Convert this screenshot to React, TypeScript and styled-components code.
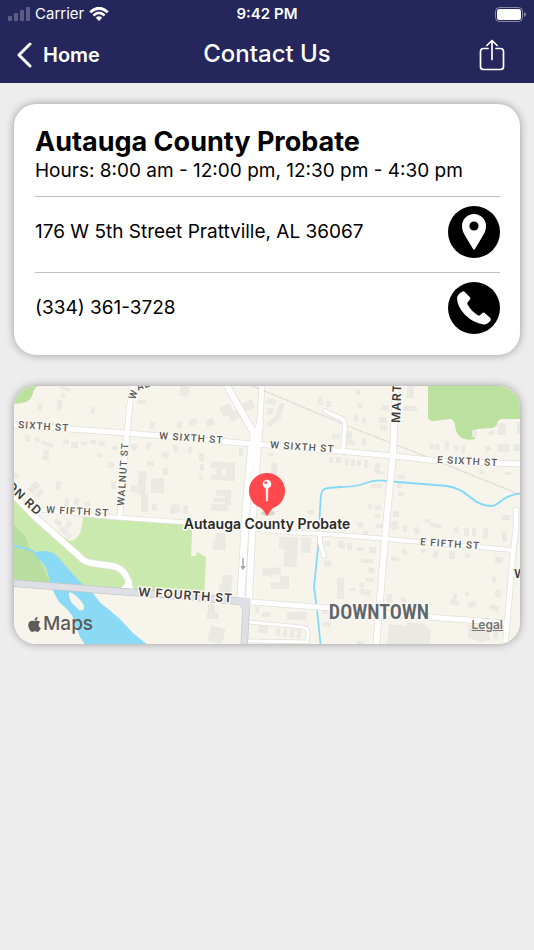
import React from "react";
import styled, { createGlobalStyle } from "styled-components";
import { FaApple } from "react-icons/fa";

const GlobalStyle = createGlobalStyle`
  *, *::before, *::after { box-sizing: border-box; }
  body {
    margin: 0;
    background: #ededed;
    color: #000;
    font-family: Inter, "Liberation Sans", sans-serif;
  }
`;

const Screen = styled.div`
  min-height: 100vh;
  background: #ededed;
`;

const Header = styled.header`
  background: #24265c;
  color: #fff;
`;

const StatusBar = styled.div`
  display: grid;
  grid-template-columns: 1fr auto 1fr;
  align-items: center;
  height: 28px;
  padding: 0 8px;
  font-size: 15px;
  line-height: 18px;
`;

const StatusGroup = styled.div<{ $end?: boolean }>`
  display: flex;
  align-items: center;
  gap: 5px;
  justify-content: ${(p) => (p.$end ? "flex-end" : "flex-start")};
`;

const Clock = styled.time`
  font-weight: 600;
`;

const NavBar = styled.nav`
  display: grid;
  grid-template-columns: 1fr auto 1fr;
  align-items: center;
  height: 55px;
  padding: 0 16px 2px;
`;

const NavButton = styled.button<{ $end?: boolean }>`
  display: flex;
  align-items: center;
  gap: 10px;
  justify-self: ${(p) => (p.$end ? "end" : "start")};
  padding: ${(p) => (p.$end ? "0 12px" : "0")};
  border: 0;
  background: none;
  color: inherit;
  font: inherit;
  font-size: 20px;
  font-weight: 600;
  cursor: pointer;
`;

const NavTitle = styled.h1`
  margin: 0;
  padding-bottom: 2px;
  font-size: 24px;
  line-height: 28px;
  font-weight: 500;
`;

const Content = styled.main`
  display: flex;
  flex-direction: column;
  gap: 31px;
  padding: 21px 14px 24px;
`;

const Card = styled.section`
  padding: 21px 20px 7px 21px;
  border-radius: 22px;
  background: #fff;
  box-shadow: 0 0 9px rgba(0, 0, 0, 0.36);
`;

const OfficeName = styled.h2`
  margin: 0;
  font-size: 27px;
  line-height: 34px;
  font-weight: 700;
`;

const Hours = styled.p`
  margin: 0 0 13px;
  font-size: 19px;
  line-height: 24px;
`;

const ContactRow = styled.div`
  display: flex;
  align-items: center;
  justify-content: space-between;
  gap: 16px;
  padding: 9px 0 14px;
  border-top: 1px solid #bdbdbd;
  font-size: 19px;
  line-height: 24px;
`;

const Address = styled.address`
  font-style: normal;
`;

const RoundLink = styled.a`
  display: flex;
  flex: none;
  width: 52px;
  height: 52px;
  border-radius: 50%;
  background: #000;
  color: #fff;
`;

const MapCard = styled.section`
  position: relative;
  overflow: hidden;
  border-radius: 22px;
  background: #f7f4eb;
`;

const MapShadow = styled.div`
  border-radius: 22px;
  box-shadow: 0 0 9px rgba(0, 0, 0, 0.36);
`;

const MapDrawing = styled.svg`
  display: block;
  width: 100%;
  aspect-ratio: 506 / 258;
`;

const MapBrand = styled.div`
  position: absolute;
  left: 12px;
  bottom: 8px;
  display: flex;
  align-items: center;
  color: #5c5c59;
  font-size: 19px;
  line-height: 24px;
  font-weight: 500;
`;

const LegalLink = styled.a`
  position: absolute;
  right: 17px;
  bottom: 12px;
  color: #777673;
  font-size: 12px;
  line-height: 14px;
  font-weight: 600;
`;

const StreetLabel = styled.text<{ $major?: boolean }>`
  font-family: ${(p) => (p.$major ? "Inter, sans-serif" : "Roboto, sans-serif")};
  font-size: ${(p) => (p.$major ? "12px" : "10px")};
  font-weight: ${(p) => (p.$major ? 600 : 500)};
  letter-spacing: 1px;
  fill: ${(p) => (p.$major ? "#3c3c3c" : "#595959")};
  stroke: #faf8f2;
  stroke-width: 3px;
  stroke-linejoin: round;
  paint-order: stroke;
`;

const DistrictLabel = styled.text`
  font-family: "Liberation Sans Narrow", "Roboto Condensed", Roboto, sans-serif;
  font-size: 20px;
  font-weight: 600;
  fill: #5f6669;
  stroke: #faf8f2;
  stroke-width: 3px;
  paint-order: stroke;
`;

const PlaceLabel = styled.text`
  font-family: Inter, sans-serif;
  font-size: 14px;
  font-weight: 600;
  fill: #2b2b2b;
  stroke: #fbfaf6;
  stroke-width: 3px;
  stroke-linejoin: round;
  paint-order: stroke;
`;

const SignalIcon = () => (
  <svg width="22" height="14" viewBox="0 0 22 14" fill="#fff" opacity="0.25" aria-hidden="true">
    <rect x="0" y="9" width="4" height="5" rx="1" />
    <rect x="6" y="6" width="4" height="8" rx="1" />
    <rect x="12" y="3" width="4" height="11" rx="1" />
    <rect x="18" y="0" width="4" height="14" rx="1" />
  </svg>
);

const WifiIcon = () => (
  <svg width="20" height="14" viewBox="0 0 20 14" fill="none" stroke="#fff" aria-hidden="true">
    <path d="M1.2 5.2Q10-2.8 18.8 5.2" strokeWidth="2.8" />
    <path d="M4.4 8.5Q10 3.4 15.6 8.5" strokeWidth="2.6" />
    <path d="M10 14 6.8 10.7Q10 8 13.2 10.7Z" fill="#fff" stroke="none" />
  </svg>
);

const BatteryIcon = () => (
  <svg width="31" height="15" viewBox="0 0 31 15" aria-hidden="true">
    <rect x="0.5" y="0.5" width="27" height="14" rx="4" fill="none" stroke="#fff" opacity="0.45" />
    <rect x="2" y="2" width="24" height="11" rx="2.5" fill="#fff" />
    <path d="M29 5v5q2-.8 2-2.5T29 5Z" fill="#fff" opacity="0.45" />
  </svg>
);

const BackIcon = () => (
  <svg width="17" height="26" viewBox="0 0 17 26" fill="none" stroke="#fff" strokeWidth="3" strokeLinecap="round" strokeLinejoin="round" aria-hidden="true">
    <path d="M14 2 3 13l11 11" />
  </svg>
);

const ShareIcon = () => (
  <svg width="28" height="32" viewBox="0 0 28 32" fill="none" stroke="#fff" strokeWidth="1.7" strokeLinecap="round" strokeLinejoin="round" aria-hidden="true">
    <path d="M10 9.5H5.5Q2.5 9.5 2.5 12.5V27.5Q2.5 30.5 5.5 30.5H22.5Q25.5 30.5 25.5 27.5V12.5Q25.5 9.5 22.5 9.5H18M14 20.5V1.5M8.8 6.5 14 1.5l5.2 5" />
  </svg>
);

const PlaceIcon = () => (
  <svg width="52" height="52" viewBox="0 0 52 52" aria-hidden="true">
    <path d="M26 8A12 12 0 0 0 14 20C14 24.5 15.8 27.5 18 31.2L25.1 43Q26 44.5 26.9 43L34 31.2C36.2 27.5 38 24.5 38 20A12 12 0 0 0 26 8Z" fill="#fff" />
    <circle cx="26" cy="20" r="4.6" fill="#000" />
  </svg>
);

const PhoneIcon = () => (
  <svg width="52" height="52" viewBox="0 0 52 52" aria-hidden="true">
    <path d="M14.5 9.5Q15.5 8.8 16.6 9.7L22 15.2Q22.9 16.3 22 17.4L19.7 20.3Q18.9 21.3 19.6 22.6Q23.3 29.5 29.9 33.2Q31.2 33.9 32.2 33L34.4 30.9Q35.5 29.9 36.7 30.9L42.3 36Q43.4 37.1 42.5 38.5Q39.5 42.8 35.5 42.5Q25.5 41 17.2 33Q9.5 25 9 16.5Q9 12.6 14.5 9.5Z" fill="#fff" />
  </svg>
);

type Building = [x: number, y: number, w: number, h: number, turn?: number];

const buildings: Building[] = [
  [37, 404, 5, 7, 5], [57, 400, 5, 10, 5], [61, 393, 4, 5, -15], [59, 387, 12, 3, 25], [91, 407, 4, 7, 10],
  [137, 400, 9, 4, 5], [150, 422, 5, 7, 5], [25, 435, 5, 7], [35, 437, 5, 5, -20], [41, 442, 12, 4, 18],
  [63, 440, 6, 4, 15], [71, 442, 7, 6], [81, 442, 6, 3, -10], [90, 440, 6, 4], [99, 441, 6, 5, 10],
  [97, 453, 5, 4, 15], [43, 450, 6, 10, 6], [13, 473, 6, 5, 35], [28, 484, 12, 7, -50], [35, 491, 9, 5, -50],
  [56, 481, 5, 9, 5], [65, 498, 4, 8], [74, 498, 5, 7, 10], [84, 502, 6, 5, -30], [108, 462, 6, 6, 20],
  [111, 482, 5, 7], [131, 444, 6, 6, 35], [112, 446, 6, 4], [146, 443, 5, 6, 20], [162, 452, 7, 6, 30],
  [147, 461, 7, 5], [138, 471, 8, 23, 3], [151, 478, 13, 15], [163, 468, 5, 7], [131, 485, 6, 7],
  [141, 494, 7, 18], [152, 504, 5, 7], [170, 506, 5, 8], [173, 445, 5, 7, -10], [188, 447, 4, 6, 10],
  [180, 386, 9, 10, 12], [177, 421, 5, 7, 5], [189, 419, 8, 6, -20], [206, 419, 8, 7, -20], [221, 405, 11, 10, -28],
  [229, 412, 10, 8, -28], [243, 401, 11, 9, -25], [267, 399, 9, 5, 12], [267, 408, 6, 6], [278, 403, 5, 13, 20],
  [266, 418, 16, 5, -38], [318, 397, 5, 8, -12], [326, 401, 5, 6], [239, 448, 4, 8], [268, 453, 5, 3],
  [271, 463, 6, 14, 4], [199, 453, 5, 8], [200, 464, 4, 7], [199, 475, 4, 5, -20], [211, 462, 24, 7, 3],
  [216, 469, 6, 9], [226, 468, 9, 13], [211, 475, 18, 5, 3], [216, 490, 15, 6, 3], [225, 490, 6, 16],
  [213, 498, 14, 4, 3], [211, 504, 17, 7, 3], [172, 504, 8, 9, -10], [183, 505, 5, 9], [307, 510, 7, 4],
  [356, 389, 4, 6], [357, 403, 5, 5], [354, 415, 4, 6, 15], [362, 418, 4, 5, 20], [381, 405, 8, 6, 10],
  [379, 417, 8, 6], [380, 425, 7, 5], [407, 386, 7, 8, 4], [404, 406, 13, 5, 4], [407, 393, 7, 5],
  [347, 431, 5, 8], [332, 434, 8, 5], [346, 440, 9, 5, 10], [362, 438, 4, 7], [329, 457, 4, 6],
  [336, 457, 5, 6], [345, 458, 4, 8], [351, 459, 4, 7], [357, 460, 4, 6], [364, 460, 4, 8], [375, 463, 5, 10, 12],
  [376, 471, 9, 3, 5], [371, 484, 11, 4, -6], [398, 475, 7, 4, 5], [397, 483, 5, 5], [398, 492, 6, 4],
  [368, 504, 4, 5, 10], [375, 505, 6, 5, -10], [394, 511, 5, 4], [430, 444, 4, 5], [435, 444, 5, 6],
  [445, 441, 4, 9], [454, 445, 4, 6], [461, 445, 4, 8], [485, 446, 6, 5, -30], [497, 444, 12, 8],
  [513, 444, 8, 7], [498, 423, 8, 12], [517, 422, 5, 12], [472, 430, 5, 7], [488, 431, 6, 4, -20],
  [479, 470, 5, 4], [505, 472, 6, 3], [54, 520, 8, 5, 45], [66, 521, 5, 8, 35], [59, 528, 9, 5, 40],
  [66, 533, 6, 5, -30], [141, 506, 6, 6], [215, 533, 10, 17, 4], [213, 541, 13, 9, 4], [222, 575, 10, 14, 5],
  [219, 585, 12, 8, 5], [279, 537, 19, 12, 2], [284, 544, 13, 23, 3], [262, 568, 19, 7, -4], [271, 582, 11, 7],
  [280, 576, 9, 13], [301, 538, 10, 15, 3], [324, 541, 6, 5], [324, 560, 7, 7, -15], [338, 541, 5, 7],
  [337, 578, 7, 21], [269, 569, 3, 8], [208, 604, 7, 13], [207, 613, 12, 6], [209, 627, 15, 16, 12],
  [255, 607, 4, 6], [262, 612, 9, 5], [287, 612, 20, 8, 2], [258, 625, 10, 8, 10], [276, 628, 4, 8, 10],
  [283, 629, 4, 8, 10], [290, 629, 4, 9, 10], [297, 629, 4, 9, 10], [322, 609, 8, 5], [323, 622, 8, 5],
  [375, 514, 5, 4], [358, 522, 5, 6, -15], [376, 524, 8, 4, 8], [363, 531, 5, 4], [393, 512, 6, 5],
  [391, 521, 7, 9, -10], [403, 525, 4, 7], [414, 527, 5, 7, -20], [425, 519, 5, 4, 20], [430, 523, 12, 5, 15],
  [454, 527, 5, 6], [464, 528, 5, 8], [472, 528, 4, 8], [483, 528, 5, 11, 5], [502, 515, 8, 5],
  [502, 532, 5, 10, -8], [341, 543, 4, 6], [347, 543, 5, 7], [357, 547, 7, 4], [369, 547, 7, 6],
  [361, 559, 12, 4, 5], [368, 568, 6, 5, 10], [366, 578, 8, 4, 8], [359, 583, 5, 4], [350, 588, 6, 3],
  [360, 589, 11, 6, 15], [391, 557, 8, 4, 10], [402, 549, 5, 6, -20], [421, 549, 5, 4], [433, 551, 5, 7, 15],
  [449, 551, 6, 8], [465, 553, 5, 5, 10], [495, 557, 8, 6, 8], [492, 576, 4, 7, -8], [495, 590, 6, 7, 15],
  [490, 605, 9, 6, 20], [450, 600, 9, 5, 10], [453, 594, 4, 7, 15], [465, 592, 4, 4], [468, 602, 8, 5, -15],
  [387, 594, 5, 10], [401, 597, 5, 6, -20], [357, 641, 7, 4], [373, 642, 4, 3], [493, 630, 5, 9],
];

const fourthStreet = "M10 583 180 596 248 602";
const whiteRoads: { d: string; w: number }[] = [
  { d: "M13 425 127 433 253 444 350 452 393 456 440 461 521 464", w: 5 },
  { d: "M134 382 130 402 126 446 120 515", w: 5 },
  { d: "M35 509 110 517 180 522 287 532 340 535 387 539 420 542 512 550", w: 4 },
  { d: "M225 382 253 432 254 446", w: 6 },
  { d: "M262 382 260 422Q259 428 254 433", w: 5 },
  { d: "M260 422 258 445 253 515 249 600", w: 6 },
  { d: "M252 444 246 510 241 598", w: 7 },
  { d: "M396 382 393 455 387 515 376 648", w: 6 },
  { d: "M516 510V530L513 553 505 648", w: 5 },
  { d: "M325 411 342 419Q345 421 345 426L343 450", w: 4 },
  { d: "M250 602 330 608 428 617 506 623", w: 5 },
  { d: "M320 533V543L324 556", w: 4 },
  { d: "M249 622 302 627Q309 628 308 634L307 642 249 641", w: 3 },
  { d: "M8 489 35 517 80 557Q84 562 91 563L112 566Q120 567 125 574L129 582 129 587", w: 6 },
];

const CountyMap = () => (
  <MapDrawing viewBox="14 386 506 258" preserveAspectRatio="xMidYMid slice" role="img" aria-label="Map of downtown Prattville">
    <defs>
      <path id="walnut-bend" d="M135 400 138 391Q141 389 180 377" />
    </defs>
    <rect x="0" y="370" width="534" height="300" fill="#f7f4eb" />
    <g fill="#bbe19f">
      <path d="M10 382H44Q33 388 33 393 31 402 22 403L10 405Z" />
      <path d="M428 382V417Q429 421 433 421L450 419Q454 419 455 425 456 435 462 438 468 441 475 439L476 429 493 428 497 425Q497 420 502 419H524V382Z" />
    </g>
    <path d="M10 494 36 518 70 541Q82 540 83 516L192 524V533L191 556 196 556 197 552 206 557 204 599 10 584Z" fill="#c9e9ad" />
    <path d="M10 523Q25 532 28 543L30 549 38 556 50 583 10 582Z" fill="#b9dfa0" />
    <g fill="#ebe9e4">
      {buildings.map(([x, y, w, h, turn = 0], i) => (
        <rect key={i} x={x} y={y} width={w} height={h} transform={`rotate(${turn} ${x + w / 2} ${y + h / 2})`} />
      ))}
      <path d="M389 624 406 626 408 622 424 624 431 630 430 644H387Z" />
      <path d="M468 625 490 629V640L480 642 468 637Z" />
    </g>
    <g fill="none" stroke="#dcdad5">
      <path d="M250 385 303 407 350 427 425 456 521 495" strokeWidth="1" />
      <path d="M250 385 303 407 350 427 425 456 521 495" strokeWidth="2" strokeDasharray="1 7" />
    </g>
    <path d="M35 553Q42 549 53 553 58 556 63 563L82 584 93 593Q99 603 107 608L120 619 133 633 149 646H86L80 637 75 623Q73 613 60 603 54 595 50 582L47 570Q45 564 37 558Z" fill="#8adaf6" />
    <path d="M10 546Q24 546 36 553" fill="none" stroke="#8adaf6" strokeWidth="2" />
    <path d="M70 592Q80 597 84 606 84 612 79 610L71 602Q67 593 70 592Z" fill="#f7f4eb" />
    <path d="M321 648 317 610 314 587 318 548 320 510 321 495Q322 488 329 488L340 487Q356 487 366 483T385 481L423 484 447 486Q460 488 470 497T492 506C500 505 502 495 523 493" fill="none" stroke="#84d9f8" strokeWidth="1.8" />
    <g fill="none" strokeLinejoin="round">
      {whiteRoads.map((road, i) => (
        <path key={i} d={road.d} stroke="#e1dfda" strokeWidth={road.w + 1.5} strokeLinecap="round" />
      ))}
      {whiteRoads.map((road, i) => (
        <path key={i} d={road.d} stroke="#fff" strokeWidth={road.w} strokeLinecap="round" />
      ))}
      <path d="M120 589 128 580 134 589Z" fill="#fff" />
      <path d={fourthStreet} stroke="#c6c7cb" strokeWidth="7.5" />
      <path d="M246 599V612L244 648" stroke="#c6c7cb" strokeWidth="7.5" />
      <path d={fourthStreet} stroke="#dfe0e5" strokeWidth="6" />
      <path d="M246 599V612L244 648" stroke="#dfe0e5" strokeWidth="6" />
      <path d="M239 598H250.5V605L247 611H243L239 605Z" fill="#dfe0e5" />
      <path d="M243 558V568M241 566 243 569 245 566" stroke="#9b9b9b" strokeWidth="1.3" />
    </g>

    <StreetLabel transform="translate(18 428) rotate(4)">SIXTH ST</StreetLabel>
    <StreetLabel transform="translate(159 439) rotate(4)">W SIXTH ST</StreetLabel>
    <StreetLabel transform="translate(270 448) rotate(4)">W SIXTH ST</StreetLabel>
    <StreetLabel transform="translate(437 463) rotate(3)">E SIXTH ST</StreetLabel>
    <StreetLabel transform="translate(46 513) rotate(3)">W FIFTH ST</StreetLabel>
    <StreetLabel transform="translate(420 545) rotate(4)">E FIFTH ST</StreetLabel>
    <StreetLabel transform="translate(124 506) rotate(-86)">WALNUT ST</StreetLabel>
    <StreetLabel>
      <textPath href="#walnut-bend">WALN</textPath>
    </StreetLabel>
    <StreetLabel $major transform="translate(400 423) rotate(-88)">MART</StreetLabel>
    <StreetLabel $major transform="translate(6 487) rotate(43)">ON RD</StreetLabel>
    <StreetLabel $major transform="translate(138 596) rotate(4)">W FOURTH ST</StreetLabel>
    <StreetLabel $major x="514" y="578">W</StreetLabel>
    <DistrictLabel x="379" y="619" textAnchor="middle">DOWNTOWN</DistrictLabel>

    <ellipse cx="268" cy="513" rx="7" ry="3" fill="#000" opacity="0.12" />
    <path d="M267 473A18 18 0 0 0 260 507.6Q264 510 265.5 514 267 517 268.5 514 270 510 274 507.6A18 18 0 0 0 267 473Z" fill="#ff494d" />
    <circle cx="267" cy="484" r="4.3" fill="#fff" />
    <circle cx="265.7" cy="482.7" r="1.4" fill="#ff494d" />
    <path d="M266 487H268L267.7 501H266.3Z" fill="#fff" stroke="#fff" strokeWidth="0.5" />
    <PlaceLabel x="267" y="529" textAnchor="middle">Autauga County Probate</PlaceLabel>
  </MapDrawing>
);

export default function App() {
  return (
    <Screen>
      <GlobalStyle />
      <Header>
        <StatusBar>
          <StatusGroup>
            <SignalIcon />
            <span>Carrier</span>
            <WifiIcon />
          </StatusGroup>
          <Clock>9:42 PM</Clock>
          <StatusGroup $end>
            <BatteryIcon />
          </StatusGroup>
        </StatusBar>
        <NavBar>
          <NavButton type="button">
            <BackIcon />
            Home
          </NavButton>
          <NavTitle>Contact Us</NavTitle>
          <NavButton type="button" $end aria-label="Share">
            <ShareIcon />
          </NavButton>
        </NavBar>
      </Header>
      <Content>
        <Card>
          <OfficeName>Autauga County Probate</OfficeName>
          <Hours>Hours: 8:00 am - 12:00 pm, 12:30 pm - 4:30 pm</Hours>
          <ContactRow>
            <Address>176 W 5th Street Prattville, AL 36067</Address>
            <RoundLink href="#map" aria-label="Show on map">
              <PlaceIcon />
            </RoundLink>
          </ContactRow>
          <ContactRow>
            <span>(334) 361-3728</span>
            <RoundLink href="tel:+13343613728" aria-label="Call">
              <PhoneIcon />
            </RoundLink>
          </ContactRow>
        </Card>
        <MapShadow>
          <MapCard id="map">
            <CountyMap />
            <MapBrand>
              <FaApple size={17} aria-hidden="true" />
              Maps
            </MapBrand>
            <LegalLink href="#legal">Legal</LegalLink>
          </MapCard>
        </MapShadow>
      </Content>
    </Screen>
  );
}
